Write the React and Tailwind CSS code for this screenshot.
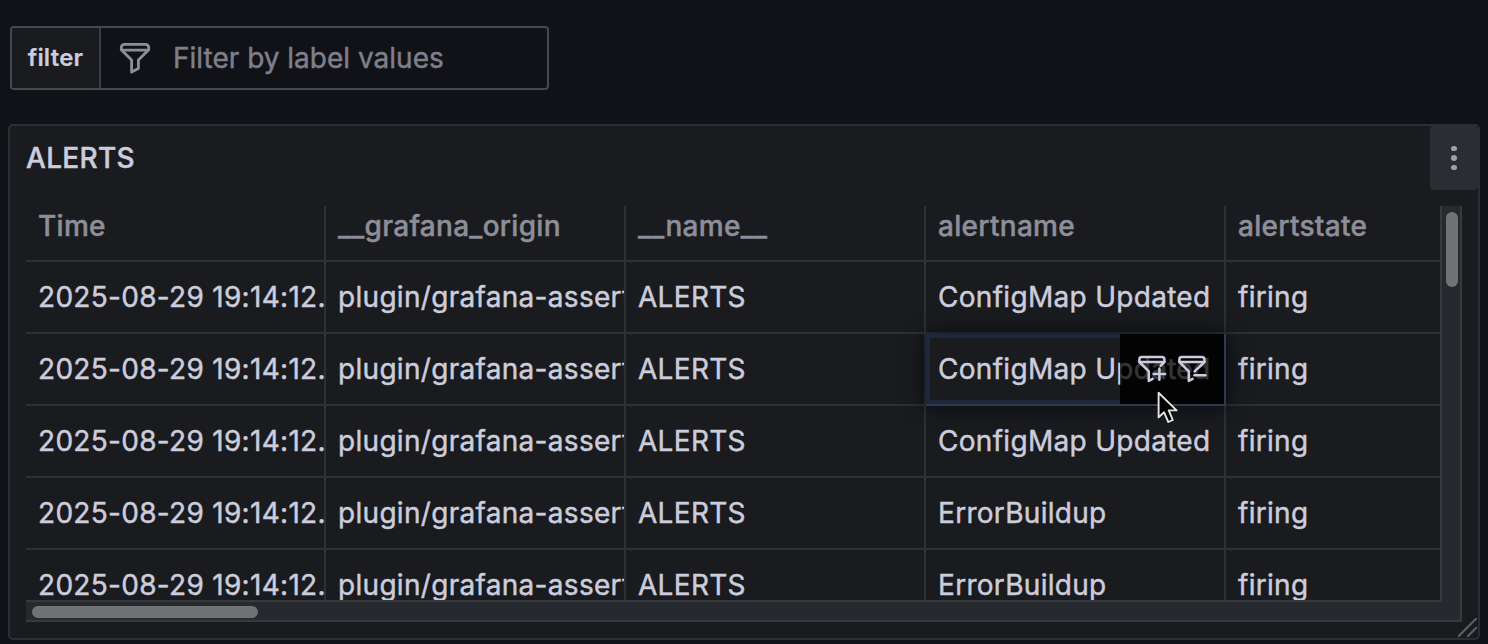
const columns = ['Time', '__grafana_origin', '__name__', 'alertname', 'alertstate'];

const alertNames = [
  'ConfigMap Updated',
  'ConfigMap Updated',
  'ConfigMap Updated',
  'ErrorBuildup',
  'ErrorBuildup',
];

const rows = alertNames.map((name) => [
  '2025-08-29 19:14:12.',
  'plugin/grafana-assert',
  'ALERTS',
  name,
  'firing',
]);

const HOVERED = { row: 1, column: 3 };

function FilterIcon({ className }) {
  return (
    <svg
      viewBox="0 0 32 32"
      fill="none"
      stroke="currentColor"
      strokeWidth="2.8"
      strokeLinejoin="round"
      className={className}
    >
      <path d="M5.4 2.4h21.2a3.1 3.1 0 0 1 3.1 3.1v2.3L19.4 18V26.6L12.6 30V18L2.3 7.8V5.5A3.1 3.1 0 0 1 5.4 2.4Z" />
      <path d="M2.3 8.2h27.4" />
    </svg>
  );
}

function FilterActionIcon({ kind }) {
  return (
    <svg
      viewBox="0 0 32 32"
      fill="none"
      stroke="currentColor"
      strokeWidth="2.5"
      strokeLinecap="round"
      strokeLinejoin="round"
      className="h-8 w-8 shrink-0"
    >
      <path d="M24.6 12.8L28.4 9V6.5A2.5 2.5 0 0 0 25.9 4H5.9A2.5 2.5 0 0 0 3.4 6.5V9L12.8 18.4V28L16.6 25.9" />
      <path d="M3.4 9H28.4" />
      {kind === 'plus' ? (
        <path d="M23.4 15.4v11.4M17.7 21.1h11.4" />
      ) : (
        <>
          <path d="M24.6 12.8L18.6 18.4" />
          <path d="M18.4 22.2H29.4" />
        </>
      )}
    </svg>
  );
}

function CellActions() {
  return (
    <div className="absolute top-0 right-0 flex h-[70px] w-[104px] items-center gap-2 bg-black/74 pl-4">
      <FilterActionIcon kind="plus" />
      <FilterActionIcon kind="minus" />
    </div>
  );
}

function Cell({ text, hovered, last }) {
  const width = last ? 'w-[214px]' : 'w-[300px] border-r-2';
  if (hovered) {
    return (
      <div className="relative z-10 h-[72px] w-[300px] shrink-0 border-r-2 border-b-2 border-[#2f3a52] bg-[#191b1f] pl-3 leading-[70px] shadow-[0_0_20px_rgba(1,4,9,0.75)]">
        <div className="pointer-events-none absolute inset-0 border-4 border-[#1d283a]" />
        <div className="pointer-events-none absolute top-0 right-0 h-[70px] w-[104px] bg-[#0c0e12]" />
        <span className="relative">{text}</span>
        <CellActions />
      </div>
    );
  }
  return (
    <div
      className={`${width} h-[72px] shrink-0 overflow-hidden border-b-2 border-[#2f3034] pl-3 leading-[70px] whitespace-nowrap`}
    >
      {text}
    </div>
  );
}

function Pointer() {
  return (
    <svg viewBox="0 0 24 36" className="absolute top-[390px] left-[1156px] z-20 h-9 w-6">
      <path
        d="M2.6 2.8V27.4L8 22.2L12.3 32L16.8 30L12.7 20.4H20.6Z"
        fill="#000"
        stroke="#e4e4e4"
        strokeWidth="1.9"
        strokeLinejoin="round"
      />
    </svg>
  );
}

export default function App() {
  return (
    <div className="relative h-[644px] w-[1488px] overflow-hidden bg-[#111217] pt-[26px] pl-2 font-['Inter',sans-serif] text-[28px] tracking-[0.3px] text-[#ccccdc] [-webkit-text-stroke:0.45px]">
      <div className="ml-0.5 flex h-16 w-[539px] overflow-hidden rounded-[4px] border-2 border-[#47474e]">
        <div className="flex w-[89px] items-center justify-center border-r-2 border-[#3d3e44] bg-[#191b1f] text-2xl font-semibold tracking-[0.2px] [-webkit-text-stroke:0.2px]">
          filter
        </div>
        <div className="flex items-center text-[#7f7f8a]">
          <FilterIcon className="mr-[22px] ml-[18px] h-8 w-8 text-[#8e8e99]" />
          <span className="tracking-normal">Filter by label values</span>
        </div>
      </div>

      <section className="relative mt-[34px] flex h-[516px] w-[1472px] flex-col rounded-[5px] border-2 border-[#2d2e33] bg-[#191b1f]">
        <header className="flex h-16 items-center justify-between pl-4">
          <h2 className="font-medium">ALERTS</h2>
          <button className="flex h-16 w-12 flex-col items-center justify-center gap-[4px] rounded-[4px] bg-[#2a2d32]">
            <i className="h-[5.5px] w-[5.5px] rounded-full bg-[#a0a0ad]" />
            <i className="h-[5.5px] w-[5.5px] rounded-full bg-[#a0a0ad]" />
            <i className="h-[5.5px] w-[5.5px] rounded-full bg-[#a0a0ad]" />
          </button>
        </header>

        <div className="mt-4 ml-4 w-[1436px]">
          <div className="flex">
            <div className="h-[394px] w-[1414px] overflow-hidden">
              <div className="flex font-medium text-[#8e8e99]">
                {columns.map((name, i) => (
                  <div
                    key={name}
                    className={`${i === 4 ? 'w-[214px]' : 'w-[300px] border-r-2'} h-14 shrink-0 border-b-2 border-[#2f3034] pl-3 leading-[40px]`}
                  >
                    {name}
                  </div>
                ))}
              </div>
              {rows.map((row, r) => (
                <div key={r} className="flex">
                  {row.map((text, c) => (
                    <Cell
                      key={c}
                      text={text}
                      last={c === 4}
                      hovered={r === HOVERED.row && c === HOVERED.column}
                    />
                  ))}
                </div>
              ))}
            </div>
            <div className="h-[394px] w-[22px] border-x-2 border-[#38393d] bg-[#26292e] pt-1.5 pl-1">
              <div className="h-[75px] w-3 rounded-full bg-[#717273]" />
            </div>
          </div>
          <div className="flex h-[22px]">
            <div className="w-[1414px] border-y-2 border-[#38393d] bg-[#26292e] pt-1 pl-1.5">
              <div className="h-3 w-[226px] rounded-full bg-[#717273]" />
            </div>
            <div className="h-[22px] w-[22px] border-r-2 border-b-2 border-[#38393d] bg-[#26292e]">
              <div className="h-0.5 w-0.5 bg-[#38393d]" />
            </div>
          </div>
        </div>

        <svg
          viewBox="0 0 20 20"
          className="absolute right-0 bottom-0 h-5 w-5"
          stroke="#5d5e63"
          strokeWidth="2.2"
          strokeLinecap="round"
        >
          <path d="M0.8 18L18 0.8M10 18L18.2 9.8" />
        </svg>
      </section>

      <Pointer />
    </div>
  );
}
